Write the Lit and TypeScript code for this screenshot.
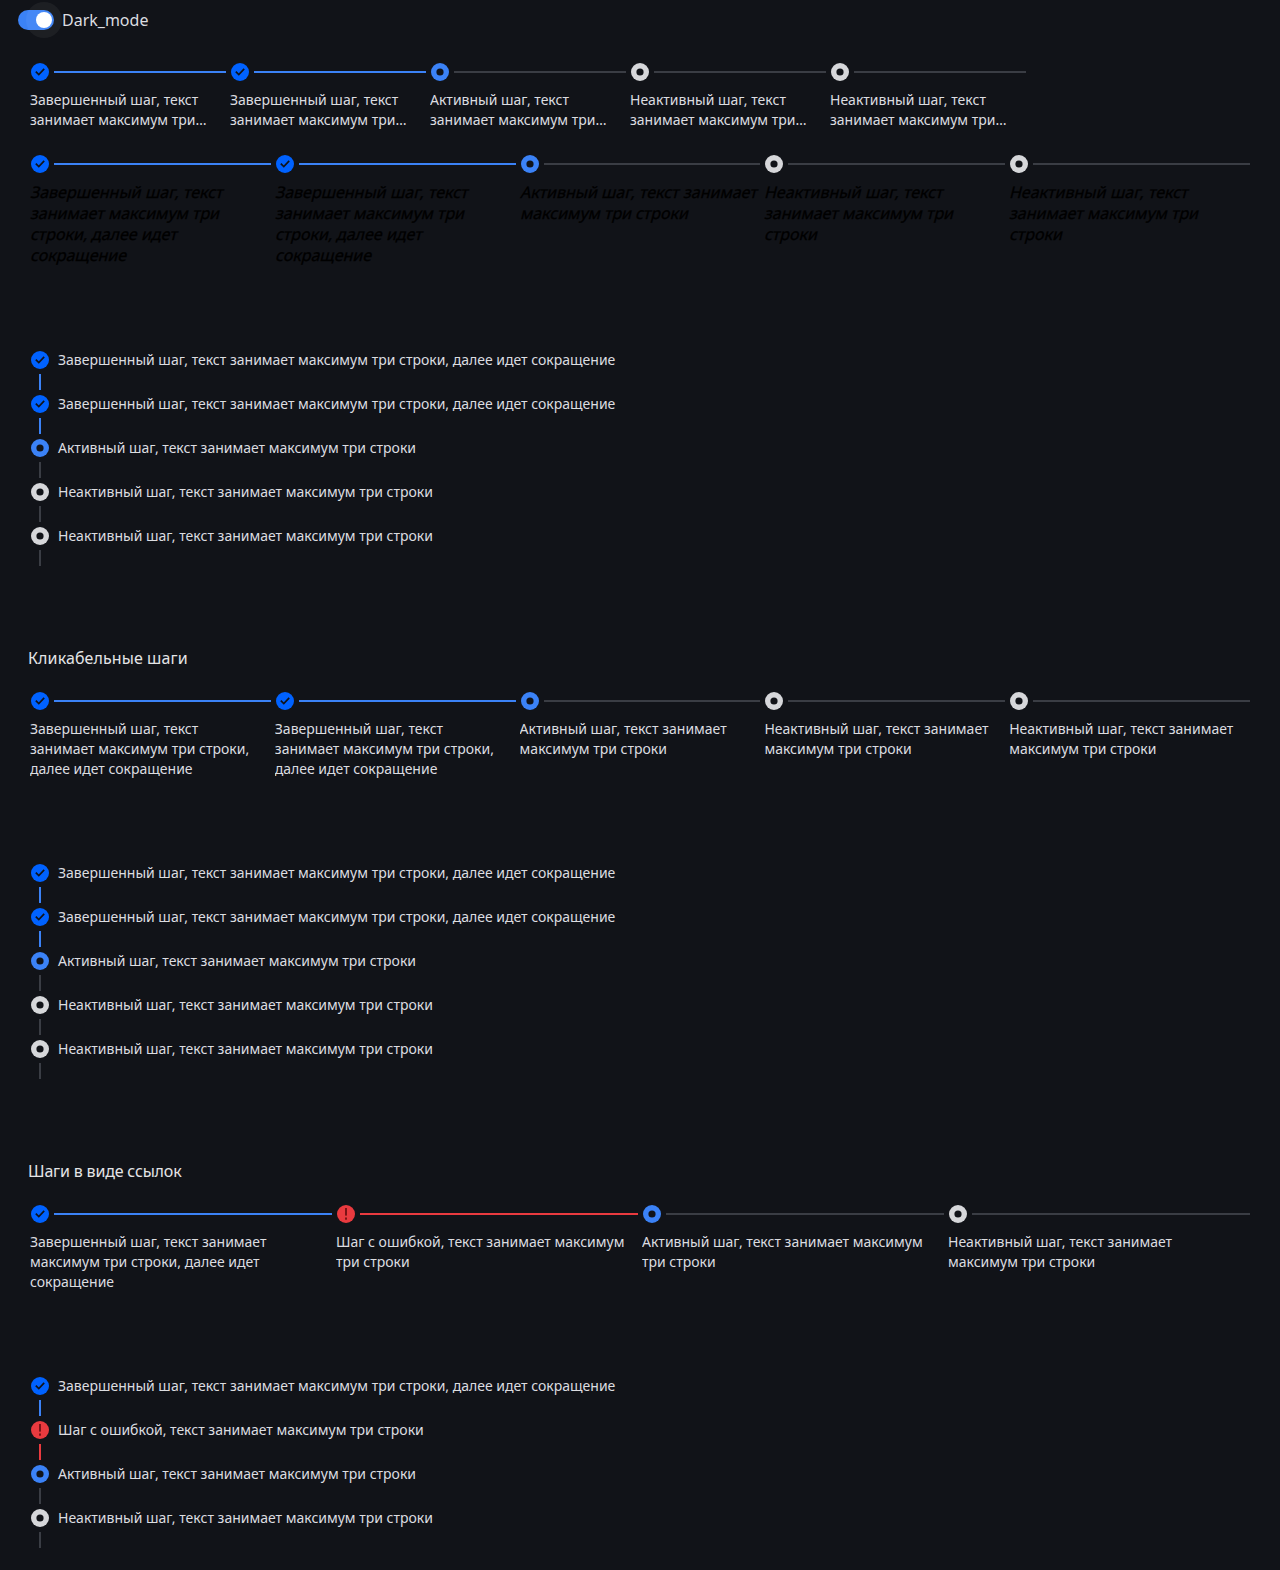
import { LitElement, html, svg, css } from "lit";
import { customElement } from "lit/decorators.js";

type S = "done" | "active" | "idle" | "error";
interface Step { s: S; t: string }
const DONE = "Завершенный шаг, текст занимает максимум три строки, далее идет сокращение";
const ACT = "Активный шаг, текст занимает максимум три строки";
const IDLE = "Неактивный шаг, текст занимает максимум три строки";
const ERR = "Шаг с ошибкой, текст занимает максимум три строки";
const five: Step[] = [
  { s: "done", t: DONE }, { s: "done", t: DONE }, { s: "active", t: ACT }, { s: "idle", t: IDLE }, { s: "idle", t: IDLE },
];
const four: Step[] = [
  { s: "done", t: DONE }, { s: "error", t: ERR }, { s: "active", t: ACT }, { s: "idle", t: IDLE },
];

function glyph(s: S) {
  if (s === "done")
    return svg`<circle cx="9" cy="9" r="9" fill="#0062ff"></circle><path d="M4.8 8.6 L7.8 11.5 L13.2 5.9" fill="none" stroke="#111318" stroke-width="1.7"></path>`;
  if (s === "error")
    return svg`<circle cx="9" cy="9" r="9" fill="#e93a3f"></circle><rect x="8" y="3" width="2" height="7.6" fill="#7a1417"></rect><rect x="8" y="12.5" width="2" height="2.2" fill="#7a1417"></rect>`;
  return svg`<circle cx="9" cy="9" r="9" fill="${s === "active" ? "#3b82f6" : "#d6d7da"}"></circle><circle cx="9" cy="9" r="3.6" fill="#111318"></circle>`;
}
const icon = (s: S) =>
  html`<svg class="icon" width="18" height="18" viewBox="0 0 18 18" aria-hidden="true">${glyph(s)}</svg>`;

@customElement("app-root")
export class AppRoot extends LitElement {
  static styles = css`
    :host { display: block; min-height: 1570px; background: #111318; font-family: "Noto Sans", sans-serif; font-size: 14px; line-height: 20px; color: #dcdde0; box-sizing: border-box; }
    .toggle-row { display: flex; align-items: center; gap: 8px; height: 20px; padding: 10px 0 0 18px; font-size: 16px; }
    .track { position: relative; width: 36px; height: 20px; border-radius: 10px; background: #3b82f6; }
    .halo { position: absolute; left: 8px; top: -8px; width: 36px; height: 36px; border-radius: 50%; background: rgba(255,255,255,.05); }
    .knob { position: absolute; left: 18px; top: 2px; width: 16px; height: 16px; border-radius: 50%; background: #fff; }
    .content { padding: 32px 26px 0 30px; display: flex; flex-direction: column; align-items: flex-start; }
    h2 { margin: 0 0 0 -2px; font-size: 16px; font-weight: 400; line-height: 20px; color: #e4e5e7; }
    h2.wide { letter-spacing: .1px; }
    h2.tight { letter-spacing: -.17px; }
    .h { display: flex; width: 100%; }
    .h.narrow { width: 1000px; }
    .step { flex: 1 1 0; min-width: 0; }
    .head { display: flex; align-items: center; height: 20px; }
    .pip { width: 20px; height: 20px; flex: none; display: flex; align-items: center; justify-content: center; }
    .icon { display: block; }
    .bar { flex: 1; height: 2px; margin: 0 4px; background: #3a3d44; }
    .bar.done { background: #3b82f6; }
    .bar.error { background: #e93a3f; }
    .label { margin-top: 8px; padding-right: 16px; display: -webkit-box; -webkit-box-orient: vertical; overflow: hidden; }
    .clamp2 .label { -webkit-line-clamp: 2; }
    .ghost .label { display: block; padding-right: 0; font-size: 16px; line-height: 21px; color: #000; overflow: visible; }
    .word { display: inline-block; transform: skewX(-14deg); transform-origin: 0 75%; -webkit-text-stroke: .3px #000; }
    .v { display: flex; flex-direction: column; gap: 4px; }
    .vstep { display: grid; grid-template-columns: 20px 1fr; column-gap: 8px; row-gap: 4px; }
    .vbar { width: 2px; height: 16px; margin: 0 auto; background: #3a3d44; }
    .vbar.done { background: #3b82f6; }
    .vbar.error { background: #e93a3f; }
    .mt23 { margin-top: 23px; }
    .mt24 { margin-top: 24px; }
    .mt84 { margin-top: 84px; }
    .mt82 { margin-top: 82px; }
  `;

  private horizontal(steps: Step[], cls: string, slant = false) {
    return html`<div class="h ${cls}">
      ${steps.map(
        (x) => html`<div class="step">
          <div class="head"><span class="pip">${icon(x.s)}</span><span class="bar ${x.s}"></span></div>
          <div class="label">${slant
            ? x.t.split(" ").map((w) => html`<span class="word">${w}</span>${" "}`)
            : x.t}</div>
        </div>`
      )}
    </div>`;
  }

  private vertical(steps: Step[], cls: string) {
    return html`<div class="v ${cls}">
      ${steps.map(
        (x) => html`<div class="vstep">
          <span class="pip">${icon(x.s)}</span><span>${x.t}</span>
          <span class="vbar ${x.s}"></span>
        </div>`
      )}
    </div>`;
  }

  render() {
    return html`
      <div class="toggle-row">
        <span class="track"><span class="halo"></span><span class="knob"></span></span>
        <span>Dark_mode</span>
      </div>
      <div class="content">
        ${this.horizontal(five, "narrow clamp2")}
        ${this.horizontal(five, "ghost mt24", true)}
        ${this.vertical(five, "mt84")}
        <h2 class="wide mt82">Кликабельные шаги</h2>
        ${this.horizontal(five, "mt23")}
        ${this.vertical(five, "mt84")}
        <h2 class="tight mt82">Шаги в виде ссылок</h2>
        ${this.horizontal(four, "mt23")}
        ${this.vertical(four, "mt84")}
      </div>
    `;
  }
}
